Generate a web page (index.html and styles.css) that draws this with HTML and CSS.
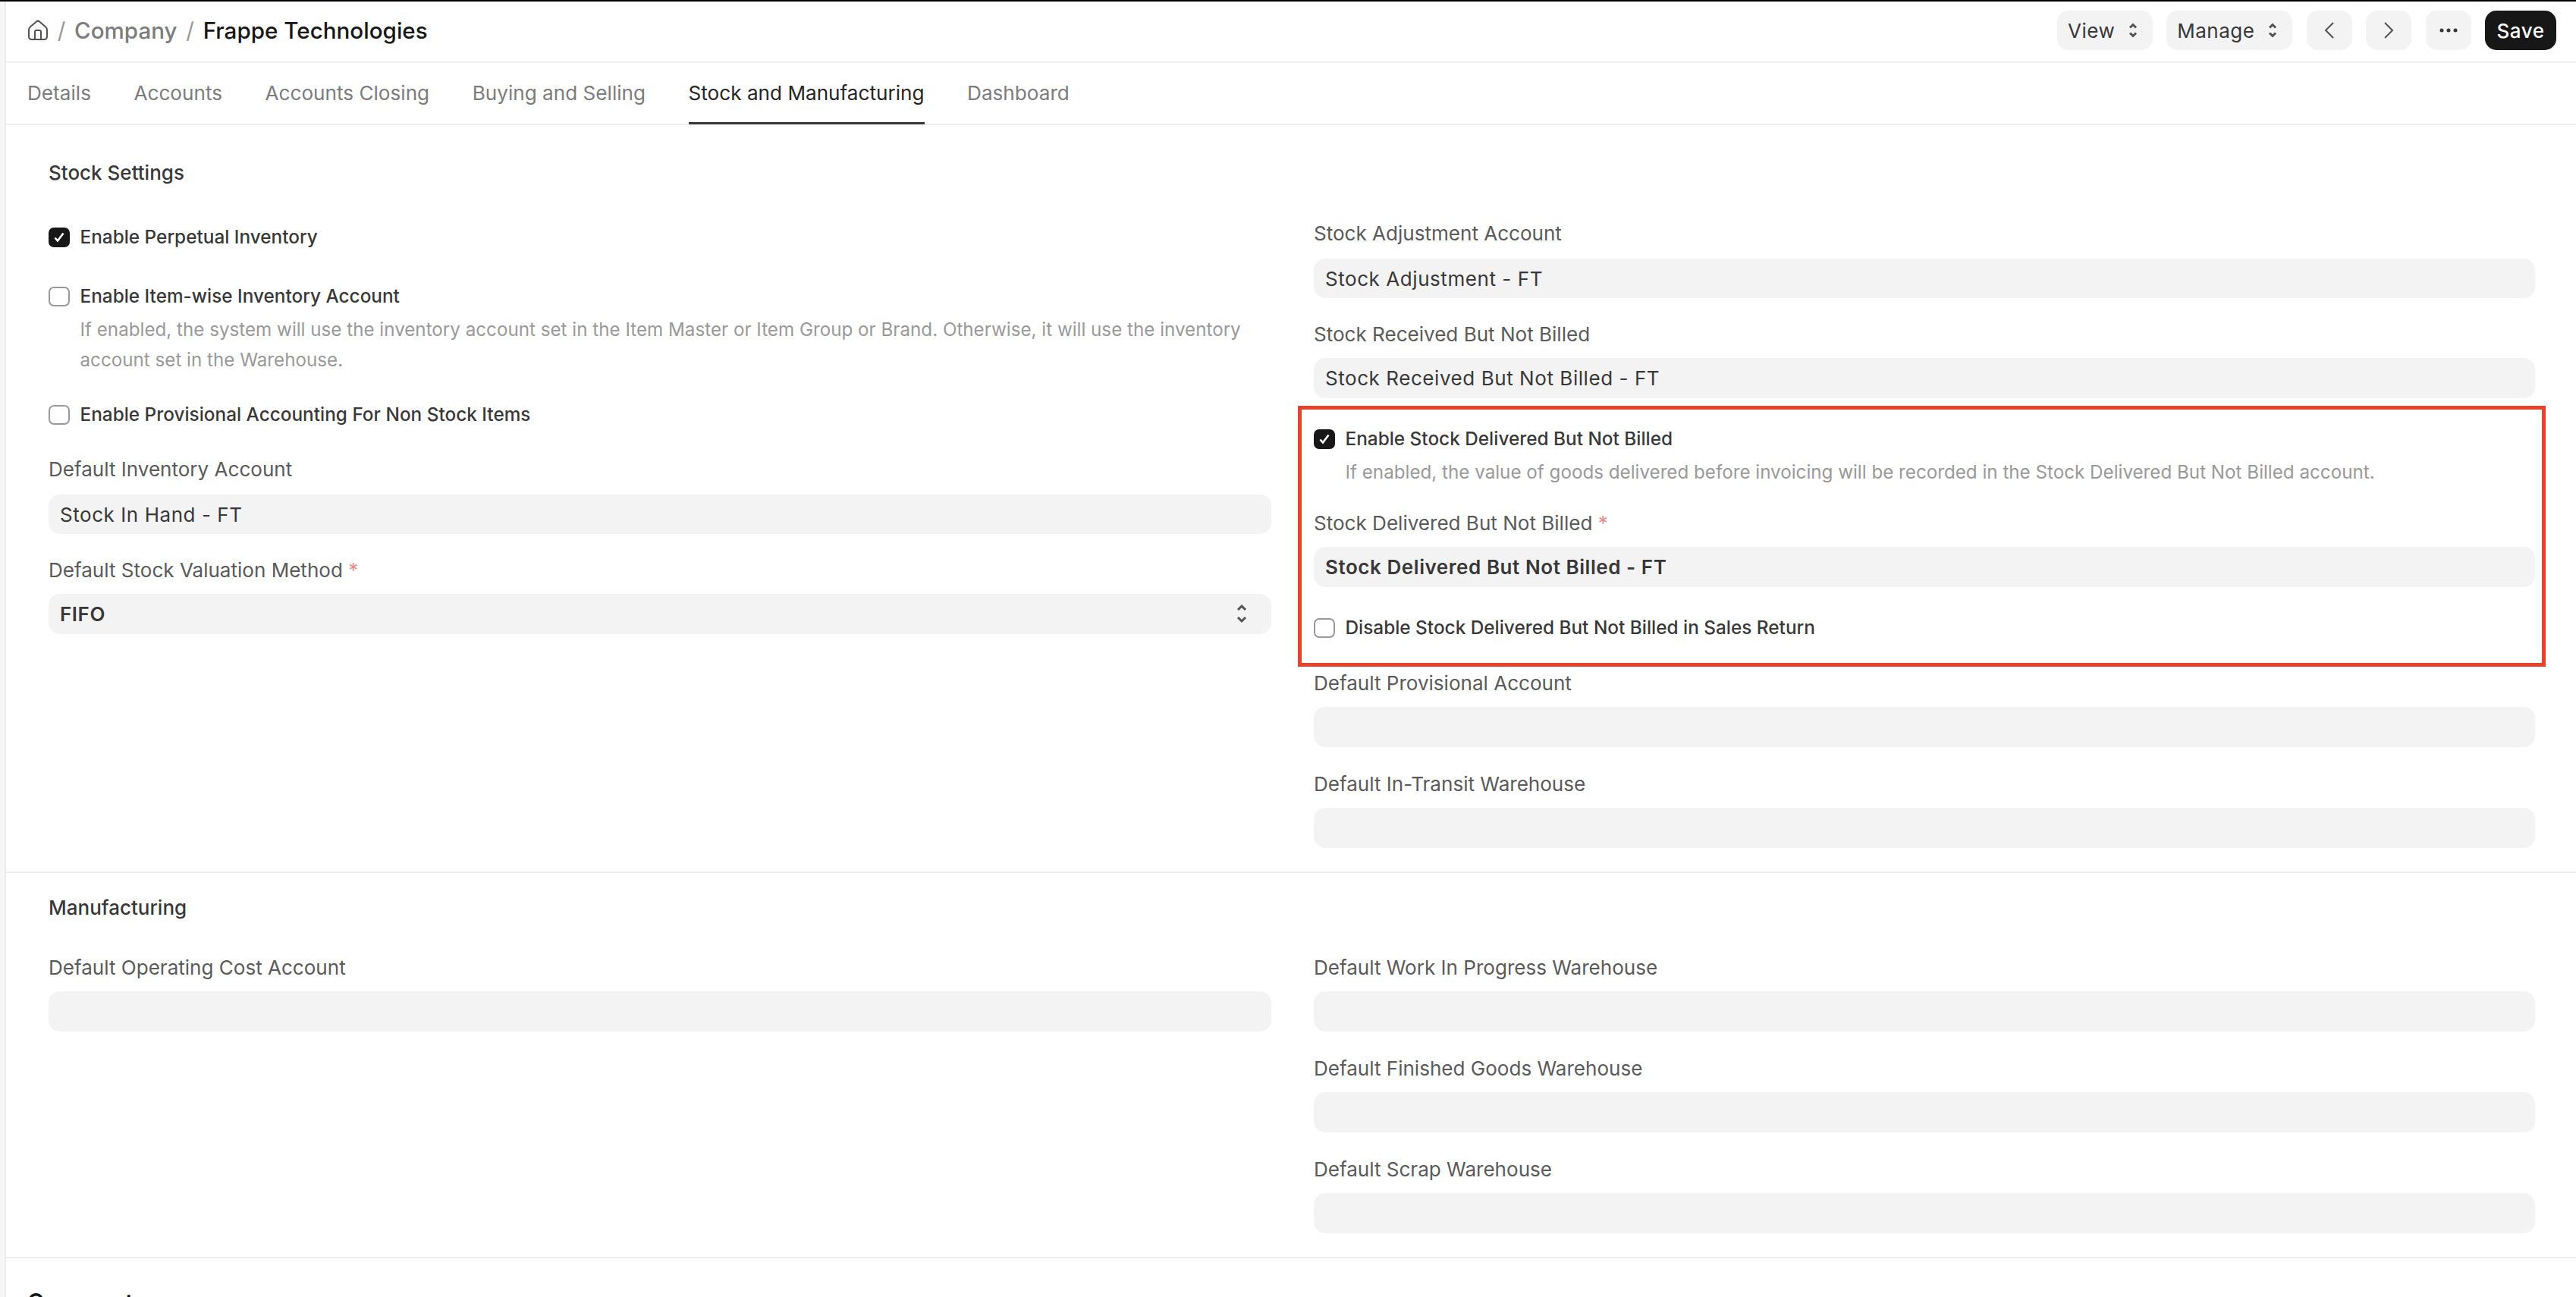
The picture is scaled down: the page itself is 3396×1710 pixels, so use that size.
FILE: index.html
```html
<!DOCTYPE html>
<html lang="en">
<head>
    <meta charset="UTF-8">
    <meta name="viewport" content="width=device-width, initial-scale=1">
    <title>Frappe Technologies</title>
    <link rel="stylesheet" href="styles.css">
</head>
<body>
<div class="page">
    <header class="page-head">
        <nav class="breadcrumb">
            <svg class="icon-home" width="28" height="28" viewBox="0 0 28 28">
                <path d="M2 13.5 Q2 11 3.8 9.4 L12 2.4 Q14 0.8 16 2.4 L24.2 9.4 Q26 11 26 13.5 V22 Q26 26 22 26 H6 Q2 26 2 22 Z"/>
                <path d="M10 26 V16 Q10 14 12 14 H16 Q18 14 18 16 V26"/>
            </svg>
            <span class="slash">/</span>
            <a class="crumb">Company</a>
            <span class="slash">/</span>
            <a class="crumb crumb-active">Frappe Technologies</a>
        </nav>
        <div class="actions">
            <button class="btn btn-menu">View
                <svg class="icon-select" width="12" height="20" viewBox="0 0 12 20"><path d="M2 6.5 L6 2.5 L10 6.5 M2 13.5 L6 17.5 L10 13.5"/></svg>
            </button>
            <button class="btn btn-menu">Manage
                <svg class="icon-select" width="12" height="20" viewBox="0 0 12 20"><path d="M2 6.5 L6 2.5 L10 6.5 M2 13.5 L6 17.5 L10 13.5"/></svg>
            </button>
            <button class="btn btn-icon">
                <svg class="icon-arrow" width="14" height="24" viewBox="0 0 14 24"><path d="M12 2 L2 12 L12 22"/></svg>
            </button>
            <button class="btn btn-icon">
                <svg class="icon-arrow" width="14" height="24" viewBox="0 0 14 24"><path d="M2 2 L12 12 L2 22"/></svg>
            </button>
            <button class="btn btn-icon">
                <svg class="icon-dots" width="24" height="6" viewBox="0 0 24 6"><circle cx="3" cy="3" r="2.5"/><circle cx="12" cy="3" r="2.5"/><circle cx="21" cy="3" r="2.5"/></svg>
            </button>
            <button class="btn btn-primary">Save</button>
        </div>
    </header>

    <nav class="tabs">
        <a class="tab">Details</a>
        <a class="tab">Accounts</a>
        <a class="tab">Accounts Closing</a>
        <a class="tab">Buying and Selling</a>
        <a class="tab active">Stock and Manufacturing</a>
        <a class="tab">Dashboard</a>
    </nav>

    <section class="section section-stock">
        <h2 class="section-title">Stock Settings</h2>
        <div class="columns">
            <div class="column">
                <div class="check">
                    <span class="box checked"><svg width="14" height="14" viewBox="0 0 14 14"><path d="M1.5 7.5 L5 11.5 L12.5 1.5"/></svg></span>
                    <span class="check-label">Enable Perpetual Inventory</span>
                </div>
                <div class="check described">
                    <span class="box"></span>
                    <span class="check-label">Enable Item-wise Inventory Account</span>
                    <p class="help">If enabled, the system will use the inventory account set in the Item Master or Item Group or Brand. Otherwise, it will use the inventory account set in the Warehouse.</p>
                </div>
                <div class="check check-last">
                    <span class="box"></span>
                    <span class="check-label">Enable Provisional Accounting For Non Stock Items</span>
                </div>
                <div class="field field-first">
                    <label>Default Inventory Account</label>
                    <input type="text" class="control" value="Stock In Hand - FT">
                </div>
                <div class="field">
                    <label>Default Stock Valuation Method <span class="reqd">*</span></label>
                    <div class="select-wrap">
                        <select class="control bold"><option>FIFO</option></select>
                        <svg class="icon-select select-arrow" width="16" height="28" viewBox="0 0 16 28"><path d="M3 9 L8 4 L13 9 M3 19 L8 24 L13 19"/></svg>
                    </div>
                </div>
            </div>
            <div class="column">
                <div class="field field-first">
                    <label>Stock Adjustment Account</label>
                    <input type="text" class="control" value="Stock Adjustment - FT">
                </div>
                <div class="field">
                    <label>Stock Received But Not Billed</label>
                    <input type="text" class="control" value="Stock Received But Not Billed - FT">
                </div>
                <div class="highlight">
                    <div class="check described">
                        <span class="box checked"><svg width="14" height="14" viewBox="0 0 14 14"><path d="M1.5 7.5 L5 11.5 L12.5 1.5"/></svg></span>
                        <span class="check-label">Enable Stock Delivered But Not Billed</span>
                        <p class="help">If enabled, the value of goods delivered before invoicing will be recorded in the Stock Delivered But Not Billed account.</p>
                    </div>
                    <div class="field">
                        <label>Stock Delivered But Not Billed <span class="reqd">*</span></label>
                        <input type="text" class="control bold" value="Stock Delivered But Not Billed - FT">
                    </div>
                    <div class="check">
                        <span class="box"></span>
                        <span class="check-label">Disable Stock Delivered But Not Billed in Sales Return</span>
                    </div>
                </div>
                <div class="field">
                    <label>Default Provisional Account</label>
                    <input type="text" class="control">
                </div>
                <div class="field">
                    <label>Default In-Transit Warehouse</label>
                    <input type="text" class="control">
                </div>
            </div>
        </div>
    </section>

    <section class="section">
        <h2 class="section-title">Manufacturing</h2>
        <div class="columns">
            <div class="column">
                <div class="field">
                    <label>Default Operating Cost Account</label>
                    <input type="text" class="control">
                </div>
            </div>
            <div class="column">
                <div class="field">
                    <label>Default Work In Progress Warehouse</label>
                    <input type="text" class="control">
                </div>
                <div class="field">
                    <label>Default Finished Goods Warehouse</label>
                    <input type="text" class="control">
                </div>
                <div class="field">
                    <label>Default Scrap Warehouse</label>
                    <input type="text" class="control">
                </div>
            </div>
        </div>
    </section>

    <div class="comments">Comments</div>
</div>
</body>
</html>
```

FILE: styles.css
```css
* {
    box-sizing: border-box;
}
body {
    margin: 0;
    height: 1710px;
    overflow: hidden;
    background-color: #fff;
    color: #383838;
    font-family: Inter, "Liberation Sans", sans-serif;
    font-size: 26.05px;
}
svg {
    display: block;
    fill: none;
    stroke: #525252;
    stroke-width: 2;
}
.page {
    height: 1710px;
    overflow: hidden;
    border-top: 2px solid #000;
    background: linear-gradient(to right, #f7f7f7 6px, #ededed 6px, #ededed 8px, #fff 8px);
    padding-left: 8px;
}

/* header */
.page-head {
    display: flex;
    justify-content: space-between;
    height: 81px;
    padding: 12px 26px 0 28px;
    border-bottom: 2px solid #f0f0f0;
}
.breadcrumb {
    display: flex;
    align-items: center;
    height: 51px;
    font-size: 29.6px;
    font-weight: 500;
    color: #7c7c7c;
}
.slash {
    width: 34px;
    text-align: center;
    font-weight: 400;
    color: #999;
}
.crumb-active {
    color: #171717;
}
.actions {
    display: flex;
    gap: 18.5px;
}
.btn {
    display: flex;
    align-items: center;
    justify-content: center;
    height: 52px;
    padding: 0;
    border: none;
    border-radius: 15px;
    background-color: #f3f3f3;
    color: #383838;
    font-family: inherit;
    font-size: 26px;
    font-weight: 420;
    letter-spacing: 0.02em;
}
.btn-menu {
    padding: 0 20px 0 14px;
    gap: 17.5px;
}
.btn-icon {
    width: 60px;
}
.btn-primary {
    width: 94px;
    background-color: #171717;
    color: #fff;
    font-weight: 500;
}
.icon-select {
    stroke-width: 3;
}
.icon-dots {
    fill: #383838;
    stroke: none;
}

/* tabs */
.tabs {
    display: flex;
    gap: 56.5px;
    height: 82px;
    padding-left: 28px;
    border-bottom: 2px solid #f0f0f0;
}
.tab {
    height: 81px;
    line-height: 79px;
    font-size: 26.15px;
    color: #7c7c7c;
}
.tab.active {
    color: #262626;
    border-bottom: 3px solid #383838;
}

/* sections */
.section {
    padding: 26px 54px 31px 56px;
    border-bottom: 2px solid #ededed;
}
.section-stock {
    padding-top: 43px;
    padding-bottom: 31px;
}
.section-title {
    margin: 0 0 43px;
    font-size: 26px;
    font-weight: 500;
    line-height: 40px;
}
.section-stock .section-title {
    margin-bottom: 44px;
}
.columns {
    display: grid;
    grid-template-columns: 1612px 1fr;
    column-gap: 56px;
}
.column > :last-child {
    margin-bottom: 0;
}

/* fields */
.field {
    margin-bottom: 33px;
}
.field label {
    display: block;
    margin-bottom: 15px;
    line-height: 32px;
    color: #5a5a5a;
}
.field-first {
    margin-bottom: 32px;
}
.field-first label {
    margin-bottom: 17px;
}
.control {
    display: block;
    width: 100%;
    height: 53px;
    padding: 0 15px;
    border: none;
    border-radius: 15px;
    background-color: #f3f3f3;
    color: #383838;
    font-family: inherit;
    font-size: 26px;
    letter-spacing: 0.0215em;
    appearance: none;
}
.field-first .control {
    height: 52px;
}
.bold {
    font-weight: 600;
}
.reqd {
    color: #e79090;
}
.select-wrap {
    position: relative;
}
.select-arrow {
    position: absolute;
    top: 12px;
    right: 31px;
}

/* checkboxes */
.check {
    display: grid;
    grid-template-columns: 28px 1fr;
    column-gap: 13.5px;
    margin-bottom: 38px;
}
.check.described {
    margin-bottom: 31px;
}
.check.check-last {
    margin-bottom: 37px;
}
.box {
    display: flex;
    align-items: center;
    justify-content: center;
    height: 26px;
    margin-top: 8px;
    border: 2px solid #999;
    border-radius: 7px;
}
.box.checked {
    border-color: #171717;
    background-color: #171717;
}
.box svg {
    stroke: #fff;
    stroke-width: 2.6;
}
.check-label {
    font-size: 24.35px;
    font-weight: 460;
    line-height: 41px;
    height: 40px;
}
.help {
    grid-column: 2;
    margin: 5px 0 0;
    font-size: 24.2px;
    line-height: 40px;
    color: #999;
}

/* red frame sits around the group without moving it */
.highlight {
    position: relative;
    margin-bottom: 38px;
}
.highlight .check:last-child {
    margin-bottom: 0;
}
.highlight::before {
    content: "";
    position: absolute;
    top: -23px;
    right: -14px;
    bottom: -32px;
    left: -21px;
    border: 5px solid #e8432a;
}

.comments {
    padding: 39px 0 0 28px;
    font-size: 29.7px;
    font-weight: 600;
    line-height: 36px;
    color: #171717;
}
```
